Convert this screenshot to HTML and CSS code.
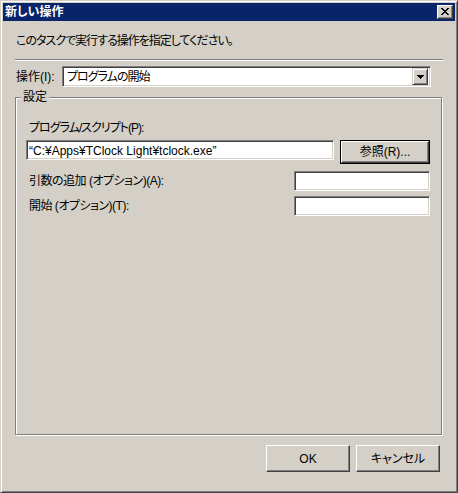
FILE: index.html
```html
<!DOCTYPE html>
<html lang="ja">
<head>
<meta charset="utf-8">
<link rel="stylesheet" href="styles.css">
</head>
<body>
<div class="window">
  <div class="titlebar">
    <span class="title">新しい操作</span>
    <div class="close-btn">
      <svg width="8" height="7" viewBox="0 0 8 7" shape-rendering="crispEdges">
        <path fill="#000" d="M0 0h2v1H0zM6 0h2v1H6zM1 1h2v1H1zM5 1h2v1H5zM2 2h4v1H2zM3 3h2v1H3zM2 4h4v1H2zM1 5h2v1H1zM5 5h2v1H5zM0 6h2v1H0zM6 6h2v1H6z"/>
      </svg>
    </div>
  </div>
  <div class="client">
    <div class="desc">このタスクで実行する操作を指定してください。</div>
    <div class="sep"></div>
    <div class="action-row">
      <span class="action-label">操作(I):</span>
      <div class="combo">
        <span class="combo-text">プログラムの開始</span>
        <div class="combo-btn">
          <svg width="7" height="4" viewBox="0 0 7 4" shape-rendering="crispEdges">
            <path fill="#000" d="M0 0h7v1H0zM1 1h5v1H1zM2 2h3v1H2zM3 3h1v1H3z"/>
          </svg>
        </div>
      </div>
    </div>
    <div class="group">
      <span class="legend">設定</span>
      <div class="field-label">プログラム/スクリプト(P):</div>
      <div class="prog-row">
        <div class="edit edit-prog">“C:¥Apps¥TClock Light¥tclock.exe”</div>
        <div class="btn btn-default"><div class="btn-inner">参照(R)...</div></div>
      </div>
      <div class="opt-row opt-args">
        <span class="opt-label">引数の追加 (オプション)(A):</span>
        <div class="edit edit-opt"></div>
      </div>
      <div class="opt-row opt-start">
        <span class="opt-label">開始 (オプション)(T):</span>
        <div class="edit edit-opt"></div>
      </div>
    </div>
    <div class="buttons">
      <div class="btn btn-ok"><div class="btn-inner">OK</div></div>
      <div class="btn btn-cancel"><div class="btn-inner">キャンセル</div></div>
    </div>
  </div>
</div>
</body>
</html>
```

FILE: styles.css
```css
html, body {
  margin: 0;
  padding: 0;
  background: #d4d0c8;
}
body {
  font-family: "Liberation Sans", "Noto Sans CJK JP", sans-serif;
  font-size: 12px;
  line-height: 12px;
  color: #000;
  font-feature-settings: "palt";
}
.window {
  width: 458px;
  height: 493px;
  box-sizing: border-box;
  background: #d4d0c8;
  border: 1px solid;
  border-color: #d4d0c8 #404040 #404040 #d4d0c8;
  box-shadow: inset 1px 1px 0 #fff, inset -1px -1px 0 #808080;
  padding: 2px;
  display: flex;
  flex-direction: column;
}
.titlebar {
  height: 18px;
  background: #0a246a;
  display: flex;
  align-items: center;
  justify-content: space-between;
  padding: 0 2px 0 2px;
}
.title {
  color: #fff;
  font-weight: bold;
  font-size: 12px;
}
.close-btn {
  width: 16px;
  height: 14px;
  box-sizing: border-box;
  background: #d4d0c8;
  border: 1px solid;
  border-color: #fff #404040 #404040 #fff;
  box-shadow: inset -1px -1px 0 #808080;
  display: flex;
  align-items: center;
  justify-content: center;
}
.close-btn svg { display: block; margin: 0 1px 1px 0; }
.client {
  padding: 0 12px;
  flex: 1;
  display: flex;
  flex-direction: column;
}
.desc {
  margin: 14px 0 0 1px;
  height: 12px;
  letter-spacing: -1px;
}
.sep {
  margin-top: 12px;
  height: 0;
  border-top: 1px solid #808080;
  border-bottom: 1px solid #fff;
}
.action-row {
  margin-top: 5px;
  display: flex;
  align-items: center;
}
.action-label {
  margin-left: 1px;
  width: 46px;
}
.combo {
  width: 369px;
  height: 21px;
  box-sizing: border-box;
  background: #fff;
  border: 1px solid;
  border-color: #808080 #fff #fff #808080;
  box-shadow: inset 1px 1px 0 #404040, inset -1px -1px 0 #d4d0c8;
  padding: 2px;
  display: flex;
  align-items: center;
  justify-content: space-between;
}
.combo-text {
  padding-left: 2px;
  letter-spacing: -1px;
}
.combo-btn {
  width: 16px;
  height: 17px;
  box-sizing: border-box;
  background: #d4d0c8;
  border: 1px solid;
  border-color: #d4d0c8 #404040 #404040 #d4d0c8;
  box-shadow: inset 1px 1px 0 #fff, inset -1px -1px 0 #808080;
  display: flex;
  align-items: center;
  justify-content: center;
}
.combo-btn svg { display: block; }
.group {
  position: relative;
  margin-top: 10px;
  width: 427px;
  height: 338px;
  box-sizing: border-box;
  border: 1px solid #808080;
  box-shadow: inset 1px 1px 0 #fff, 1px 1px 0 #fff;
  padding: 0 0 0 10px;
}
.legend {
  position: absolute;
  top: -7px;
  left: 5px;
  padding: 0 2px;
  background: #d4d0c8;
}
.field-label {
  margin: 24px 0 0 3px;
  height: 12px;
  letter-spacing: -1px;
}
.prog-row {
  margin-top: 6px;
  display: flex;
  align-items: flex-start;
  gap: 6px;
}
.edit {
  height: 20px;
  box-sizing: border-box;
  background: #fff;
  border: 1px solid;
  border-color: #808080 #fff #fff #808080;
  box-shadow: inset 1px 1px 0 #404040, inset -1px -1px 0 #d4d0c8;
  padding: 4px 2px 0 2px;
  white-space: nowrap;
  overflow: hidden;
}
.edit-prog { width: 308px; }
.edit-opt { width: 136px; }
.btn {
  box-sizing: border-box;
  background: #d4d0c8;
  border: 1px solid;
  border-color: #fff #404040 #404040 #fff;
  box-shadow: inset -1px -1px 0 #808080;
  display: flex;
}
.btn-inner {
  flex: 1;
  display: flex;
  align-items: center;
  justify-content: center;
}
.btn-default {
  width: 90px;
  height: 24px;
  border: 1px solid #000;
  box-shadow: none;
}
.btn-default .btn-inner {
  border: 1px solid;
  border-color: #fff #404040 #404040 #fff;
  box-shadow: inset -1px -1px 0 #808080;
}
.opt-row {
  display: flex;
  align-items: center;
  justify-content: space-between;
  padding-right: 11px;
}
.opt-args { margin-top: 7px; }
.opt-start { margin-top: 5px; }
.opt-label {
  margin-left: 3px;
  letter-spacing: -0.5px;
}
.buttons {
  margin-top: 10px;
  display: flex;
  justify-content: flex-end;
  gap: 6px;
  padding-right: 3px;
}
.btn-ok, .btn-cancel {
  width: 84px;
  height: 27px;
}
```
